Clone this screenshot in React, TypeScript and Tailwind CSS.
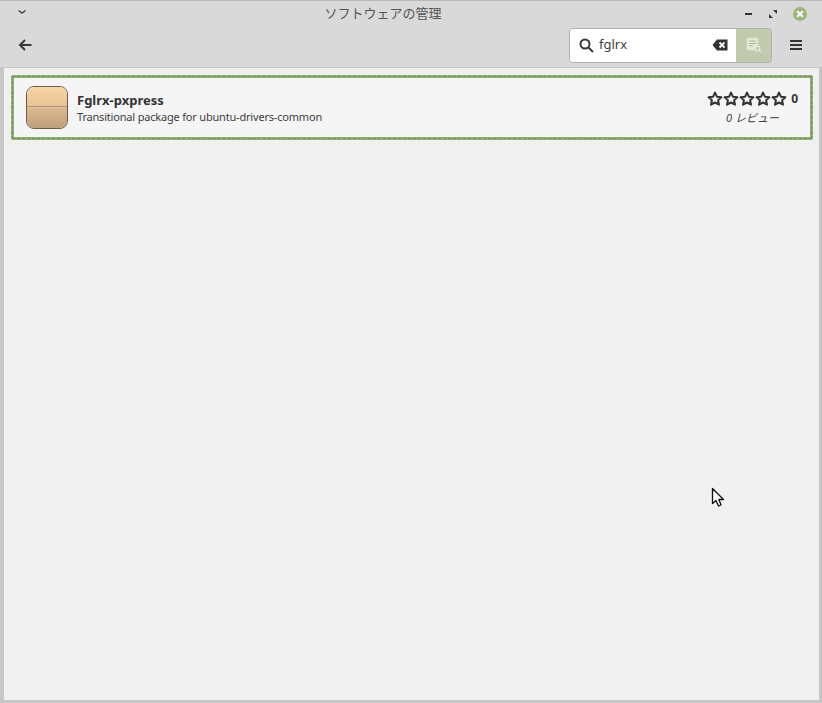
const CJK = "font-['Noto_Sans','Noto_Sans_CJK_JP',sans-serif]";

function Star() {
  return (
    <svg width="16" height="16" viewBox="0 0 16 16" className="block">
      <path
        d="M8 1.6l1.9 4.1 4.5.5-3.3 3 .9 4.5L8 11.5l-4 2.2.9-4.5-3.3-3 4.5-.5z"
        fill="none"
        stroke="#333"
        strokeWidth="2"
        strokeLinejoin="round"
      />
    </svg>
  );
}

function PackageIcon() {
  return (
    <div className="flex h-[43px] w-[42px] flex-col overflow-hidden rounded-[8px] border border-[#6b5d4c]">
      <div className="h-[20px] border-b border-[#b0916c] bg-gradient-to-b from-[#f8d5a4] to-[#e8c394]" />
      <div className="flex-1 border-t border-[#e3c8a3] bg-gradient-to-b from-[#dcb88e] to-[#bf9f7c]" />
    </div>
  );
}

export default function App() {
  return (
    <div className={`flex h-[703px] w-[822px] flex-col overflow-hidden bg-[#d9d9d9] ${CJK}`}>
      {/* title bar */}
      <div className="flex h-[26px] items-center border-t border-[#b8b8b8] pl-[16px] pr-[15px]">
        <svg width="12" height="12" viewBox="0 0 12 12" className="-mt-[3px]">
          <path d="M2.5 4.5L6 7l3.5-2.5" fill="none" stroke="#444" strokeWidth="1.5" />
        </svg>
        <div className="flex-1 pr-[7px] text-center text-[13px] leading-none text-[#555]">
          ソフトウェアの管理
        </div>
        <div className="flex items-center">
          <div className="mr-[17px] h-[2px] w-[7px] bg-[#333]" />
          <svg width="8" height="8" viewBox="0 0 8 8" className="mr-[16px]">
            <path d="M4 0h4v4zM0 4v4h4z" fill="#333" />
          </svg>
          <div className="flex h-[14px] w-[14px] items-center justify-center rounded-full bg-[#9ab87c]">
            <svg width="8" height="8" viewBox="0 0 8 8">
              <path d="M1.2 1.2l5.6 5.6M6.8 1.2L1.2 6.8" stroke="#fff" strokeWidth="2" />
            </svg>
          </div>
        </div>
      </div>

      {/* toolbar */}
      <div className="flex h-[41px] items-center pl-[17px] pr-[20px]">
        <svg width="16" height="16" viewBox="0 0 16 16" className="-mt-[3px]">
          <path d="M14.5 8H3M8 3L3 8l5 5" fill="none" stroke="#3a3a3a" strokeWidth="2" />
        </svg>
        <div className="ml-auto -mt-[3px] flex h-[35px] w-[203px] overflow-hidden rounded-[4px] border border-[#b0b0b0]">
          <div className="flex flex-1 items-center bg-white pl-[9px] pr-[8px]">
            <svg width="15" height="15" viewBox="0 0 15 15">
              <circle cx="6" cy="6" r="4.5" fill="none" stroke="#3a3a3a" strokeWidth="2" />
              <path d="M9.5 9.5l4.5 4.5" stroke="#3a3a3a" strokeWidth="2" />
            </svg>
            <span className="ml-[5px] text-[13px] text-[#3d3d3d]">fglrx</span>
            <svg width="16" height="12" viewBox="0 0 16 12" className="ml-auto">
              <path d="M5 .5h10.5v11H5L.5 6z" fill="#333" />
              <path d="M7.5 3.5l5 5M12.5 3.5l-5 5" stroke="#fff" strokeWidth="1.8" />
            </svg>
          </div>
          <div className="flex w-[35px] items-center justify-center bg-[#bfcbaa]">
            <svg width="16" height="16" viewBox="0 0 16 16">
              <path d="M1 1h11v12H1z" fill="#e4e9da" stroke="#d6ddc8" />
              <path d="M3 4h7M3 6.5h7M3 9h4" stroke="#a9b692" />
              <circle cx="11.5" cy="11.5" r="2.3" fill="#bfcbaa" stroke="#e4e9da" strokeWidth="1.2" />
              <path d="M13 13l2 2" stroke="#e4e9da" strokeWidth="1.2" />
            </svg>
          </div>
        </div>
        <div className="ml-[18px] -mt-[3px] flex w-[12px] flex-col gap-[2px]">
          <div className="h-[2px] bg-[#333]" />
          <div className="h-[2px] bg-[#333]" />
          <div className="h-[2px] bg-[#333]" />
        </div>
      </div>

      {/* content */}
      <div className="relative flex flex-1 flex-col border-l-[4px] border-r-[3px] border-b-[3px] border-t border-[#c6c6c6] bg-[#f0f0f0] pl-[7px] pr-[6px] pt-[7px]">
        <div className="flex h-[65px] items-center rounded-[2px] border-[3px] border-[#8fb075] bg-[#f5f5f5] pl-[12px] pr-[12px] outline-1 -outline-offset-2 outline-dashed outline-[#6f9450]">
          <PackageIcon />
          <div className="ml-[9px] flex flex-col">
            <div className="mt-[1px] text-[13px] font-bold leading-[17px] text-[#333]">Fglrx-pxpress</div>
            <div className="text-[11px] leading-[15px] tracking-[-0.19px] text-[#3d3d3d]">
              Transitional package for ubuntu-drivers-common
            </div>
          </div>
          <div className="ml-auto flex flex-col items-center">
            <div className="flex items-center">
              <Star />
              <Star />
              <Star />
              <Star />
              <Star />
              <span className="ml-[4px] text-[12px] font-bold leading-none text-[#333]">0</span>
            </div>
            <div className="mt-[3px] text-[11px] italic leading-[15px] text-[#3d3d3d]">0 レビュー</div>
          </div>
        </div>
        {/* mouse cursor */}
        <svg width="14" height="22" viewBox="0 0 14 22" className="absolute left-[707px] top-[419px]">
          <path d="M1.5 1.5v15l3.5-3 2.5 5.5 2.5-1.2L7.8 12.5h4.7z" fill="#fff" stroke="#111" strokeWidth="1.3" strokeLinejoin="round" />
        </svg>
      </div>
    </div>
  );
}
